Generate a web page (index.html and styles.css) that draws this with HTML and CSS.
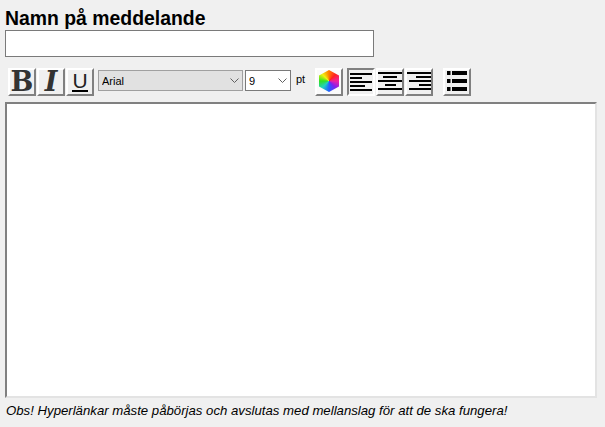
FILE: index.html
```html
<!DOCTYPE html>
<html lang="sv">
<head>
<meta charset="utf-8">
<title>Namn på meddelande</title>
<link rel="stylesheet" href="styles.css">
</head>
<body>
<main class="page">
  <h1 class="title">Namn på meddelande</h1>
  <input class="name" type="text">
  <div class="toolbar">
    <div class="group">
      <button class="btn bold">B</button>
      <button class="btn italic">I</button>
      <button class="btn under"><span>U</span></button>
    </div>
    <div class="pick pick-font">
      <select class="font"><option>Arial</option></select>
      <svg class="chev" width="9" height="5" viewBox="0 0 9 5"><path d="M0.5 0.5l4 4 4-4"/></svg>
    </div>
    <div class="pick pick-size">
      <select class="size"><option>9</option></select>
      <svg class="chev" width="9" height="5" viewBox="0 0 9 5"><path d="M0.5 0.5l4 4 4-4"/></svg>
    </div>
    <span class="pt">pt</span>
    <button class="btn color"><span class="hex"></span></button>
    <div class="aligns">
      <button class="btn pressed">
        <svg width="22" height="24" viewBox="0 0 22 24"><path d="M0 4h22M0 8h12M0 12h22M0 16h15M0 20h22" class="bars"/></svg>
      </button>
      <button class="btn">
        <svg width="24" height="24" viewBox="0 0 24 24"><path d="M0 3h24M5 7h14M0 11h24M7 15h11M0 19h24" class="bars"/></svg>
      </button>
      <button class="btn">
        <svg width="24" height="24" viewBox="0 0 24 24"><path d="M0 3h24M9 7h15M2 11h22M12 15h12M2 19h22" class="bars"/></svg>
      </button>
    </div>
    <button class="btn list">
      <svg width="20" height="24" viewBox="0 0 20 24"><path d="M0 3h3.500M5 3h15M0 11h3.500M5 11h15M0 19h3.500M5 19h15" class="dots"/></svg>
    </button>
  </div>
  <textarea class="editor"></textarea>
  <p class="note">Obs! Hyperlänkar måste påbörjas och avslutas med mellanslag för att de ska fungera!</p>
</main>
</body>
</html>
```
FILE: styles.css
```css
* { box-sizing: border-box; }
html, body { margin: 0; height: 100%; }
body { background: #f0f0f0; font-family: "Liberation Sans", Arial, sans-serif; color: #000; overflow: hidden; }
.page { padding: 6px 8px 0 5px; display: flex; flex-direction: column; align-items: flex-start; }
.title { margin: 0; font-size: 19.4px; line-height: 24px; font-weight: bold; }
.name { display: block; width: 369px; height: 27px; border: 1px solid #7a7a7a; background: #fff; padding: 1px 2px; }
.toolbar { display: flex; align-items: flex-start; height: 28px; margin-top: 11px; padding-left: 3px; }
.group, .aligns { display: flex; gap: 1px; }
.btn { width: 28px; height: 28px; padding: 0; margin: 0; display: flex; align-items: center; justify-content: center; background: #f0f0f0; border: 2px solid; border-color: #fff #808080 #808080 #fff; color: #333; }
.bold, .italic { font-family: "DejaVu Serif", serif; font-size: 27px; font-weight: bold; line-height: 24px; }
.italic { font-style: italic; }
.under { font-family: "Liberation Sans", sans-serif; font-size: 21px; color: #222; }
.under span { display: block; line-height: 19px; height: 21px; margin-top: -1px; border-bottom: 2px solid #000; }
.pick { position: relative; height: 21px; margin-top: 2px; }
.pick-font { width: 145px; margin-left: 4px; }
.pick-size { width: 46px; margin-left: 2px; }
.font, .size { display: block; appearance: none; width: 100%; height: 21px; border-radius: 0; outline: none; font-family: "Liberation Sans", sans-serif; font-size: 11px; padding: 0 0 0 3px; color: #000; }
.font { border: 1px solid #a0a0a0; background: #e1e1e1; }
.size { border: 1px solid #7a7a7a; background: #fff; }
.chev { position: absolute; right: 4px; top: 8px; fill: none; stroke: #606060; stroke-width: 1; }
.pt { font-size: 11px; width: 24px; padding: 4px 0 0 5px; line-height: 14px; }
.color { background: #fafafa; }
.hex { display: block; width: 20px; height: 22px; margin-top: -2px; background: conic-gradient(#ff7a00, #ff2020, #f020a0, #8020f0, #2060ff, #20d0c0, #30e020, #f0f010, #ff7a00); clip-path: polygon(50% 0, 100% 25%, 100% 75%, 50% 100%, 0 75%, 0 25%); }
.aligns { margin-left: 4px; }
.pressed { border-color: #808080 #fff #fff #808080; }
.bars, .dots { stroke: #000; stroke-width: 2; fill: none; }
.dots { stroke-width: 4; }
.list { margin-left: 10px; }
.editor { display: block; width: 592px; height: 296px; margin-top: 6px; border: 2px solid; border-color: #808080 #e3e3e3 #e3e3e3 #808080; background: #fff; resize: none; outline: none; padding: 2px; }
.note { margin: 6px 0 0 1px; font-size: 13.2px; line-height: 14px; font-style: italic; }
```
